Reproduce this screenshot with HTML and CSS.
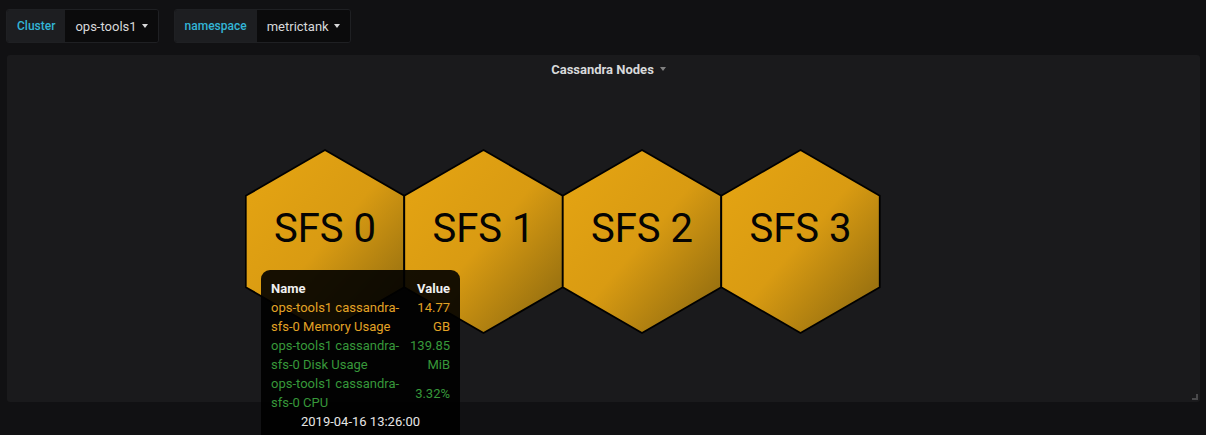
FILE: index.html
```html
<!DOCTYPE html>
<html>
<head>
<meta charset="utf-8">
<link rel="stylesheet" href="styles.css">
</head>
<body>
<div class="submenu">
  <div class="var">
    <span class="var-label">Cluster</span>
    <span class="var-value">ops-tools1 <span class="caret"></span></span>
  </div>
  <div class="var">
    <span class="var-label">namespace</span>
    <span class="var-value">metrictank <span class="caret"></span></span>
  </div>
</div>
<div class="panel">
  <div class="panel-header">
    <span class="panel-title">Cassandra Nodes</span><span class="caret caret-title"></span>
  </div>
  <div class="panel-body">
    <svg class="hexes" width="640" height="188" viewBox="0 0 640 188">
      <defs>
        <linearGradient id="gold" x1="0" y1="0" x2="1" y2="1">
          <stop offset="0" stop-color="#e6a512"/>
          <stop offset="0.5" stop-color="#d99b12"/>
          <stop offset="1" stop-color="#85640f"/>
        </linearGradient>
      </defs>
      <g class="hex">
        <polygon points="80,2 159.24,47.75 159.24,139.25 80,185 0.76,139.25 0.76,47.75"/>
        <text x="80" y="94">SFS 0</text>
      </g>
      <g class="hex">
        <polygon points="238.5,2 317.74,47.75 317.74,139.25 238.5,185 159.26,139.25 159.26,47.75"/>
        <text x="238.5" y="94">SFS 1</text>
      </g>
      <g class="hex">
        <polygon points="397,2 476.24,47.75 476.24,139.25 397,185 317.76,139.25 317.76,47.75"/>
        <text x="397" y="94">SFS 2</text>
      </g>
      <g class="hex">
        <polygon points="555.5,2 634.74,47.75 634.74,139.25 555.5,185 476.26,139.25 476.26,47.75"/>
        <text x="555.5" y="94">SFS 3</text>
      </g>
    </svg>
  </div>
  <div class="resize-handle"></div>
  <div class="tooltip">
    <div class="tt-grid">
      <div class="tt-head">Name</div><div class="tt-head tt-val">Value</div>
      <div class="orange">ops-tools1 cassandra-sfs-0 Memory Usage</div><div class="orange tt-val">14.77 GB</div>
      <div class="green">ops-tools1 cassandra-sfs-0 Disk Usage</div><div class="green tt-val">139.85 MiB</div>
      <div class="green">ops-tools1 cassandra-sfs-0 CPU</div><div class="green tt-val">3.32%</div>
    </div>
    <div class="tt-time">2019-04-16 13:26:00</div>
  </div>
</div>
</body>
</html>
```
FILE: styles.css
```css
html, body {
  margin: 0;
  padding: 0;
  background: #111113;
  font-family: Roboto, "Liberation Sans", sans-serif;
  overflow: hidden;
  height: 435px;
}
.submenu {
  display: flex;
  gap: 15px;
  padding: 9px 6px 0 6px;
}
.var {
  display: flex;
  height: 34px;
  border: 1px solid #1f2023;
  border-radius: 3px;
  overflow: hidden;
  box-sizing: border-box;
}
.var-label {
  display: flex;
  align-items: center;
  padding: 0 10px 0 10px;
  background: #1d1e21;
  color: #33b5d6;
  font-size: 12px;
  font-weight: 500;
}
.var-value {
  display: flex;
  align-items: center;
  gap: 5px;
  padding: 0 10px 0 10px;
  background: #0b0b0c;
  color: #d8d9da;
  font-size: 13px;
}
.caret {
  display: inline-block;
  width: 0;
  height: 0;
  border-left: 3.5px solid transparent;
  border-right: 3.5px solid transparent;
  border-top: 4px solid #d8d9da;
}
.panel {
  position: relative;
  margin: 12px 6px 0 7px;
  height: 347px;
  background: #1a1a1c;
  border-radius: 3px;
}
.panel-header {
  display: flex;
  justify-content: center;
  align-items: center;
  gap: 6px;
  height: 28px;
  padding-left: 10px;
}
.panel-title {
  color: #d8d9da;
  font-size: 13px;
  font-weight: 700;
}
.caret-title {
  border-top-color: #808080;
}
.panel-body {
  padding: 65px 0 0 238px;
}
.hexes {
  display: block;
}
.hex polygon {
  fill: url(#gold);
  stroke: #000;
  stroke-width: 1.8;
  stroke-linejoin: miter;
}
.hex text {
  font-family: Roboto, "Liberation Sans", sans-serif;
  font-size: 40px;
  fill: #050403;
  text-anchor: middle;
}
.resize-handle {
  position: absolute;
  right: 2px;
  bottom: 2px;
  width: 4px;
  height: 4px;
  border-right: 2px solid #4a4a4c;
  border-bottom: 2px solid #4a4a4c;
}
.tooltip {
  position: absolute;
  left: 254px;
  top: 215px;
  width: 179px;
  padding: 9px 10px 12px 10px;
  background: rgba(0, 0, 0, 0.9);
  border-radius: 9px;
  font-size: 13px;
  line-height: 19px;
}
.tt-grid {
  display: grid;
  grid-template-columns: 136px 43px;
  align-items: center;
}
.tt-head {
  color: #f0f0f0;
  font-weight: 700;
}
.tt-val {
  text-align: right;
}
.orange {
  color: #e3a325;
}
.green {
  color: #37983a;
}
.tt-time {
  text-align: center;
  color: #e6e6e6;
  font-size: 13px;
  margin-top: 0;
}
```
